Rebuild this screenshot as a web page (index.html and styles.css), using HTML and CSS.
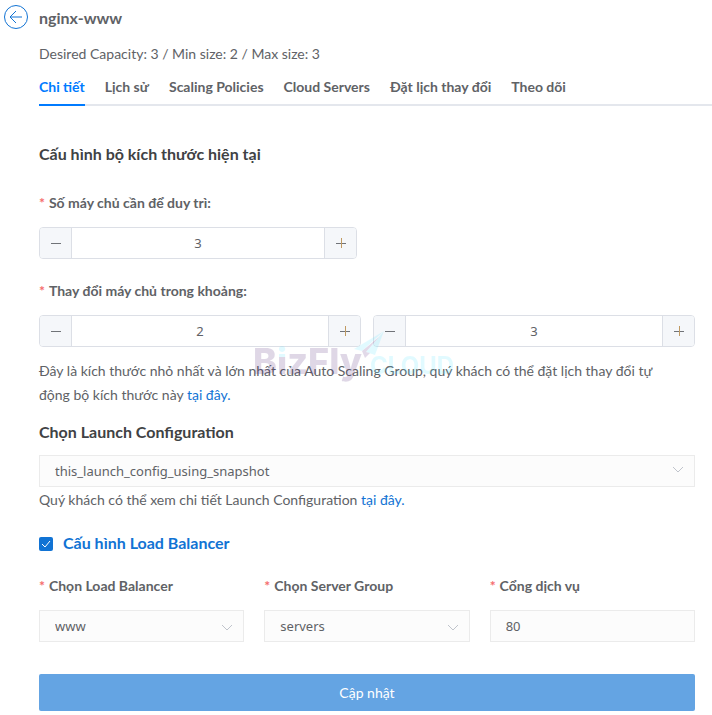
FILE: index.html
```html
<!DOCTYPE html>
<html lang="vi">

<head>
  <meta charset="utf-8">
  <meta name="viewport" content="width=device-width, initial-scale=1">
  <title>nginx-www</title>
  <link rel="stylesheet" href="styles.css">
</head>

<body>
  <header class="page-header">
    <a class="back" href="#" aria-label="Back">
      <svg width="26" height="26" viewBox="0 0 26 26" fill="none" stroke="currentColor">
        <circle cx="13" cy="13" r="11.5" />
        <path d="M19 13H7M13 7L7 13L13 19" />
      </svg>
    </a>
    <h1 class="page-title">nginx-www</h1>
  </header>

  <main class="content">
    <p class="summary">Desired Capacity: 3 / Min size: 2 / Max size: 3</p>

    <nav class="tabs">
      <a class="tab active" href="#">Chi tiết</a>
      <a class="tab" href="#">Lịch sử</a>
      <a class="tab" href="#">Scaling Policies</a>
      <a class="tab" href="#">Cloud Servers</a>
      <a class="tab" href="#">Đặt lịch thay đổi</a>
      <a class="tab" href="#">Theo dõi</a>
    </nav>

    <form class="config-form">
      <h2 class="heading size-heading">Cấu hình bộ kích thước hiện tại</h2>

      <label class="label" for="desired">Số máy chủ cần để duy trì:</label>
      <div class="number single">
        <button class="step" type="button" aria-label="-"><svg class="sign" viewBox="0 0 12 12"><path d="M1 6.5H11" /></svg></button>
        <input class="number-input" type="text" id="desired" value="3">
        <button class="step" type="button" aria-label="+"><svg class="sign" viewBox="0 0 12 12"><path d="M1 6.5H11" /><path class="upright" d="M6.5 1V11" /></svg></button>
      </div>

      <label class="label" for="min">Thay đổi máy chủ trong khoảng:</label>
      <div class="range">
        <div class="number">
          <button class="step" type="button" aria-label="-"><svg class="sign" viewBox="0 0 12 12"><path d="M1 6.5H11" /></svg></button>
          <input class="number-input" type="text" id="min" value="2">
          <button class="step" type="button" aria-label="+"><svg class="sign" viewBox="0 0 12 12"><path d="M1 6.5H11" /><path class="upright" d="M6.5 1V11" /></svg></button>
        </div>
        <div class="number">
          <button class="step" type="button" aria-label="-"><svg class="sign" viewBox="0 0 12 12"><path d="M1 6.5H11" /></svg></button>
          <input class="number-input" type="text" id="max" value="3" aria-label="Max size">
          <button class="step" type="button" aria-label="+"><svg class="sign" viewBox="0 0 12 12"><path d="M1 6.5H11" /><path class="upright" d="M6.5 1V11" /></svg></button>
        </div>
        <!-- brand watermark over the fields -->
        <div class="watermark" aria-hidden="true">
          <span class="mark-biz">B<span class="mark-i">i</span>zFly</span>
          <span class="mark-cloud">CLOUD</span>
          <svg class="mark-plane" width="32" height="28" viewBox="0 0 32 28">
            <path fill="#52e3ff" d="M31 0L1 18L9 20Z" />
            <path fill="#52e3ff" d="M31 0L13 21L22 24Z" />
            <path fill="#5b2a80" d="M9 20L12 27L17 22L13 21L26 6Z" />
          </svg>
        </div>
      </div>
      <p class="hint">Đây là kích thước nhỏ nhất và lớn nhất của Auto Scaling Group, quý khách có thể đặt lịch thay đổi tự động bộ kích thước này <a class="link" href="#">tại đây.</a></p>

      <h2 class="heading"><label for="launch">Chọn Launch Configuration</label></h2>
      <div class="select">
        <select class="field" id="launch">
          <option>this_launch_config_using_snapshot</option>
        </select>
        <svg class="arrow high" viewBox="0 0 12 8"><path d="M1 1L6 6L11 1" /></svg>
      </div>
      <p class="hint after-select">Quý khách có thể xem chi tiết Launch Configuration <a class="link" href="#">tại đây.</a></p>

      <div class="check">
        <input class="checkbox" type="checkbox" id="use-lb" checked>
        <label class="check-label" for="use-lb">Cấu hình Load Balancer</label>
      </div>

      <div class="balancer">
        <div class="item">
          <label class="label" for="lb">Chọn Load Balancer</label>
          <div class="select">
            <select class="field" id="lb">
              <option>www</option>
            </select>
            <svg class="arrow" viewBox="0 0 12 8"><path d="M1 1L6 6L11 1" /></svg>
          </div>
        </div>
        <div class="item">
          <label class="label" for="group">Chọn Server Group</label>
          <div class="select">
            <select class="field" id="group">
              <option>servers</option>
            </select>
            <svg class="arrow" viewBox="0 0 12 8"><path d="M1 1L6 6L11 1" /></svg>
          </div>
        </div>
        <div class="item">
          <label class="label" for="port">Cổng dịch vụ</label>
          <input class="field" type="text" id="port" value="80">
        </div>
      </div>

      <button class="submit" type="submit">Cập nhật</button>
    </form>
  </main>
</body>

</html>
```

FILE: styles.css
```css
* {
  box-sizing: border-box;
}

body {
  margin: 0;
  background: #fff;
  color: #606266;
  font-family: Lato, "Noto Sans", sans-serif;
  font-size: 14px;
  line-height: 24px;
}

h1, h2, p {
  margin: 0;
}

input, select, button {
  margin: 0;
  font-family: "Noto Sans", sans-serif;
  font-size: 13px;
  color: #606266;
}

.page-header {
  display: flex;
  align-items: center;
  gap: 10px;
  padding: 4px 3px 0;
}

.back {
  display: flex;
  color: #1173d4;
}

.page-title {
  padding-top: 2px;
  font-size: 16px;
  font-weight: 700;
}

.content {
  padding-left: 39px;
}

.summary {
  padding-top: 12px;
}

.tabs {
  display: flex;
  gap: 20px;
  margin-top: 9px;
  border-bottom: 2px solid #e4e7ed;
}

.tab {
  padding-bottom: 5px;
  margin-bottom: -2px;
  border-bottom: 2px solid transparent;
  color: #606266;
  font-weight: 700;
  text-decoration: none;
}

.tab.active {
  color: #007bff;
  border-color: #007bff;
}

.config-form {
  padding: 36px 17px 4px 0;
}

.heading {
  color: #404244;
  font-size: 16px;
  font-weight: 700;
  margin-bottom: 11px;
}

.size-heading {
  margin-bottom: 25px;
}

.label {
  display: block;
  margin-bottom: 12px;
  font-weight: 700;
}

.label::before {
  content: "*";
  margin-right: 4px;
  color: #f56c6c;
}

.number {
  display: flex;
  height: 32px;
  border: 1px solid #dcdfe6;
  border-radius: 4px;
  overflow: hidden;
}

.single {
  width: 318px;
  margin-bottom: 20px;
}

.step {
  display: flex;
  align-items: center;
  justify-content: center;
  flex: 0 0 32px;
  padding: 0;
  border: 0;
  background: #f5f7fa;
}

.step:first-child {
  border-right: 1px solid #dcdfe6;
}

.step:last-child {
  border-left: 1px solid #dcdfe6;
}

.sign {
  width: 12px;
  height: 12px;
  fill: none;
  stroke: #707378;
}

.upright {
  stroke: #c09a62;
}

.number-input {
  flex: 1;
  min-width: 0;
  padding: 0;
  border: 0;
  text-align: center;
}

.range {
  position: relative;
  display: grid;
  grid-template-columns: 1fr 1fr;
  gap: 12px;
}

.watermark {
  position: absolute;
  top: 16px;
  left: 50%;
  display: flex;
  align-items: baseline;
  gap: 8px;
  margin-left: -114px;
  opacity: 0.17;
  pointer-events: none;
  white-space: nowrap;
}

.mark-biz {
  color: #451b70;
  font: 800 36px/60px Inter, sans-serif;
}

/* cyan dot over a purple stem */
.mark-i {
  background: linear-gradient(#52e3ff 40%, #451b70 40%);
  background-clip: text;
  color: transparent;
}

.mark-cloud {
  color: #52e3ff;
  font: 700 24px/60px Inter, sans-serif;
}

.mark-plane {
  position: absolute;
  top: 0;
  left: 100px;
}

.hint {
  margin-top: 12px;
  margin-bottom: 13px;
  padding-right: 12px;
}

.link {
  color: #1173d4;
  text-decoration: none;
}

.select {
  position: relative;
}

.field {
  display: block;
  width: 100%;
  height: 32px;
  padding: 0 15px;
  border: 1px solid #ebebeb;
  border-radius: 0;
  background: #fcfcfc;
  appearance: none;
}

.arrow {
  position: absolute;
  top: 14px;
  right: 11px;
  width: 12px;
  height: 8px;
  fill: none;
  stroke: #c0c4cc;
  pointer-events: none;
}

.arrow.high {
  top: 11px;
}

.after-select {
  margin: 1px 0 19px;
}

.check {
  display: flex;
  align-items: center;
  gap: 10px;
  margin-bottom: 19px;
}

.checkbox {
  width: 14px;
  height: 14px;
  margin-top: 2px;
  border-radius: 2px;
  background: #1173d4 url("data:image/svg+xml,%3Csvg xmlns='http://www.w3.org/2000/svg' viewBox='0 0 14 14'%3E%3Cpath d='M3 7L6 10L11 4' fill='none' stroke='white'/%3E%3C/svg%3E") center no-repeat;
  appearance: none;
}

.check-label {
  color: #1173d4;
  font-size: 16px;
  font-weight: 700;
}

.balancer {
  display: grid;
  grid-template-columns: repeat(3, 1fr);
  gap: 20px;
}

.submit {
  width: 100%;
  height: 37px;
  margin-top: 32px;
  border: 0;
  border-radius: 2px;
  background: #64a4e3;
  color: #fff;
  font-family: Lato, "Noto Sans", sans-serif;
  font-size: 14px;
}
```
